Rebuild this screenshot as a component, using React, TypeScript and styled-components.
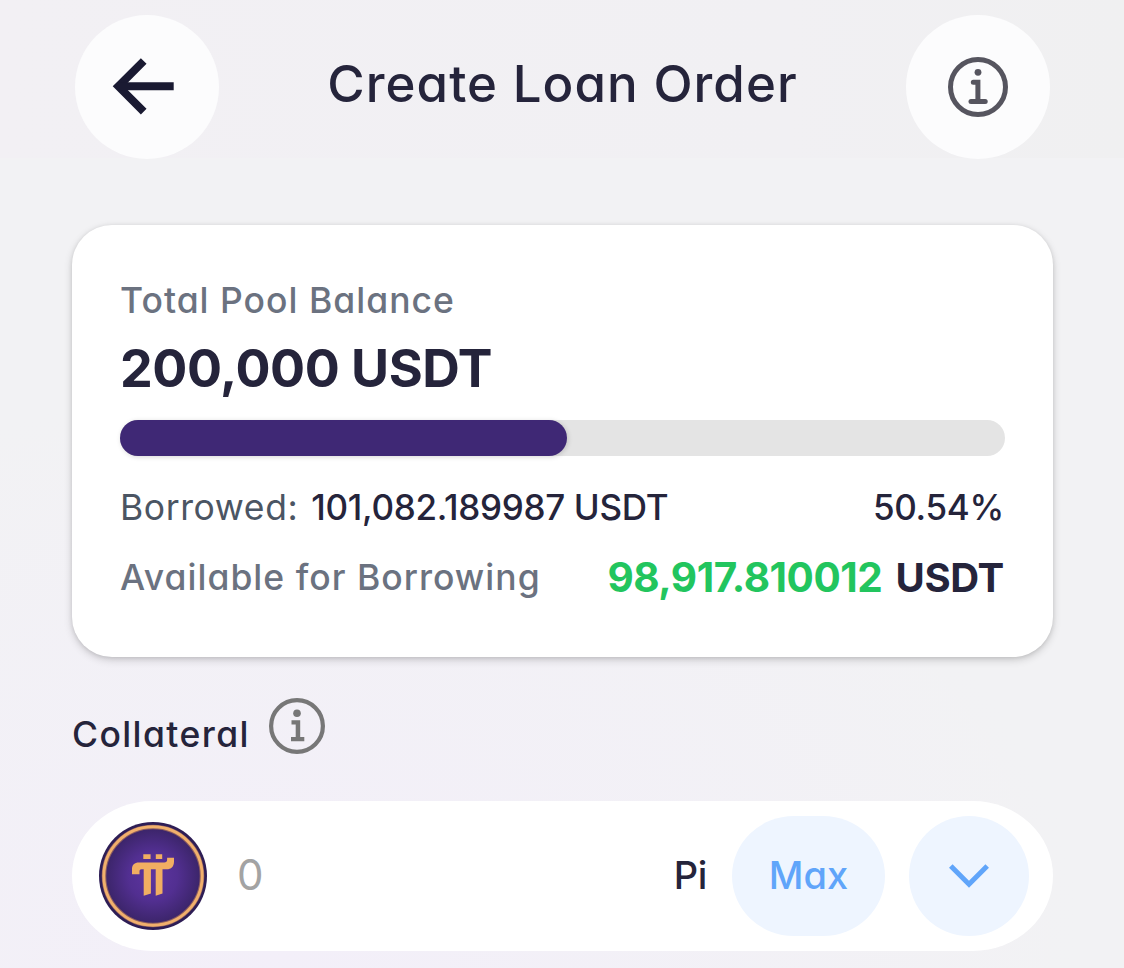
import styled, { createGlobalStyle } from "styled-components";

const colors = {
  ink: "#25243b",
  muted: "#6b7280",
  slate: "#4b5563",
  green: "#22c55e",
  purple: "#3f2875",
  track: "#e4e4e4",
  blue: "#60a5fa",
  blueSoft: "#eef5ff",
  placeholder: "#a3a3a3",
};

const GlobalStyle = createGlobalStyle`
  *, *::before, *::after {
    box-sizing: border-box;
  }

  body {
    margin: 0;
    font-family: Inter, "Open Sans", sans-serif;
    font-feature-settings: "cv11";
    color: ${colors.ink};
  }
`;

const Page = styled.div`
  width: 1124px;
  height: 968px;
  overflow: hidden;
  background:
    radial-gradient(ellipse 800px 560px at 25% 98%, #f3eff9 0%, rgba(243, 239, 249, 0) 100%),
    #f2f2f4;
`;

const Header = styled.header`
  display: flex;
  align-items: center;
  justify-content: space-between;
  height: 158px;
  padding: 16px 74px 0 75px;
  background: linear-gradient(90deg, #f2f0f4, #f1f0f3 70%, #f0f0f1);
`;

const RoundButton = styled.button`
  display: flex;
  align-items: center;
  justify-content: center;
  flex: none;
  width: 144px;
  height: 144px;
  padding: 0;
  border: none;
  border-radius: 50%;
  background: #fcfcfd;
`;

type TextProps = {
  $size: number;
  $weight?: number;
  $color?: string;
  $tracking?: number;
};

const Text = styled.span<TextProps>`
  font-size: ${({ $size }) => $size}px;
  font-weight: ${({ $weight = 500 }) => $weight};
  color: ${({ $color = colors.ink }) => $color};
  letter-spacing: ${({ $tracking = 0 }) => $tracking}px;
  line-height: 54px;
  white-space: nowrap;
`;

const Title = styled(Text)`
  padding-bottom: 6px;
`;

const Main = styled.main`
  display: flex;
  flex-direction: column;
  padding: 67px 71px 0 72px;
`;

const Card = styled.section`
  display: flex;
  flex-direction: column;
  height: 432px;
  padding: 49px 48px 0;
  border-radius: 40px;
  background: #fff;
  box-shadow: 0 3px 9px rgba(0, 0, 0, 0.16), 0 1px 4px rgba(0, 0, 0, 0.1);
`;

const Balance = styled(Text)`
  margin-top: 2px;
  line-height: 78px;
`;

const Track = styled.div`
  height: 36px;
  margin: 12px 0 24px;
  border-radius: 18px;
  background: ${colors.track};
`;

const Fill = styled.div`
  height: 100%;
  border-radius: 18px;
  background: ${colors.purple};
  box-shadow: 1px 1px 5px rgba(0, 0, 0, 0.16);
`;

const Row = styled.div`
  display: flex;
  justify-content: space-between;
  align-items: center;
  height: 54px;
  padding-right: 1px;

  & + & {
    margin-top: 17px;
  }
`;

const Pair = styled.div<{ $gap: number }>`
  display: flex;
  align-items: baseline;
  gap: ${({ $gap }) => $gap}px;
`;

const SectionLabel = styled.div`
  display: flex;
  align-items: flex-start;
  gap: 19px;
  height: 103px;
  margin-top: 41px;
`;

const LabelText = styled(Text)`
  margin-top: 10px;
`;

const AmountField = styled.div`
  display: flex;
  align-items: center;
  height: 150px;
  padding: 0 24px 0 27px;
  border-radius: 80px / 75px;
  background: #fff;
`;

const Amount = styled(Text)`
  flex: 1;
  padding: 0 0 2px 30px;
`;

const Unit = styled(Text)`
  padding-bottom: 2px;
`;

const MaxButton = styled.button`
  width: 153px;
  height: 120px;
  margin: 0 24px 0 25px;
  padding: 0 0 2px;
  border: none;
  border-radius: 62px / 60px;
  background: ${colors.blueSoft};
  font-family: inherit;
  font-feature-settings: inherit;
`;

const SelectButton = styled(RoundButton)`
  width: 120px;
  height: 120px;
  background: ${colors.blueSoft};
`;

function ArrowLeftIcon() {
  return (
    <svg width="62" height="58" viewBox="0 0 62 58" fill="none" stroke="#1a1a32" strokeWidth="8" overflow="visible">
      <path d="M27.7 3 2.4 28.3l25.3 25.3" />
      <path d="M3 28.3h54.7" />
    </svg>
  );
}

function HeaderInfoIcon() {
  return (
    <svg width="60" height="60" viewBox="0 0 60 60" fill="none" stroke="#56555f" strokeLinecap="round">
      <circle cx="30" cy="30" r="27.5" strokeWidth="5" />
      <circle cx="30" cy="15.3" r="3.4" fill="#56555f" stroke="none" />
      <path d="M25.3 25.2h4.6v19" strokeWidth="5" strokeLinejoin="miter" />
      <path d="M23 44.5h14.2" strokeWidth="5" />
    </svg>
  );
}

function LabelInfoIcon() {
  return (
    <svg width="56" height="56" viewBox="0 0 56 56" fill="#777">
      <circle cx="28" cy="28" r="25.9" fill="none" stroke="#777" strokeWidth="4.2" />
      <circle cx="28" cy="15.2" r="3.8" />
      <path d="M22.5 22.3h8.7v16.8h4.1v4.2H22v-4.2h4.7V26.5h-4.2z" />
    </svg>
  );
}

function ChevronIcon() {
  return (
    <svg width="42" height="26" viewBox="0 0 42 26" fill="none" stroke={colors.blue} strokeWidth="5">
      <path d="M2.8 3 21 21.2 39.2 3" />
    </svg>
  );
}

function PiCoin() {
  return (
    <svg width="108" height="108" viewBox="0 0 108 108">
      <defs>
        <radialGradient id="coin">
          <stop offset="0" stopColor="#5d35a0" />
          <stop offset="0.5" stopColor="#522f91" />
          <stop offset="1" stopColor="#3a2467" />
        </radialGradient>
      </defs>
      <circle cx="54" cy="54" r="54" fill="#2d1d55" />
      <circle cx="54" cy="54" r="49" fill="url(#coin)" stroke="#8d5d60" strokeWidth="4.6" />
      <circle cx="54" cy="54" r="49.2" fill="none" stroke="#f1b06c" strokeWidth="2.9" />
      <g fill="#f1ae62">
        <path d="M44.3 32.2h7.3v4.9h-7.3zM56.8 32.2h6.4v4.9h-6.4z" />
        <path d="M33 52.2V47c0-4.3 2.6-6.5 6.8-6.5h25.4c2 0 2.9-1 2.9-2.5v-2.3H75v3.8c0 5-2.6 7.8-7.5 7.8h-4v24.1l-6.8 2.3V47.3h-4.8v24.1l-7.2 2.3V47.3h-2.2c-1.4 0-2 .7-2 2v2.9z" />
      </g>
    </svg>
  );
}

function App() {
  const borrowedShare = 50.54;

  return (
    <Page>
      <GlobalStyle />
      <Header>
        <RoundButton aria-label="Back">
          <ArrowLeftIcon />
        </RoundButton>
        <Title as="h1" $size={51} $weight={540} $tracking={1.05}>
          Create Loan Order
        </Title>
        <RoundButton aria-label="About loans">
          <HeaderInfoIcon />
        </RoundButton>
      </Header>
      <Main>
        <Card>
          <Text $size={35.5} $weight={530} $color={colors.muted} $tracking={1.02}>
            Total Pool Balance
          </Text>
          <Balance $size={52} $weight={660} $tracking={-0.45}>
            200,000 USDT
          </Balance>
          <Track>
            <Fill style={{ width: `${borrowedShare}%` }} />
          </Track>
          <Row>
            <Pair $gap={13}>
              <Text $size={35.5} $weight={400} $color={colors.slate} $tracking={0.6}>
                Borrowed:
              </Text>
              <Text $size={35} $tracking={-0.3}>
                101,082.189987 USDT
              </Text>
            </Pair>
            <Text $size={35} $tracking={-0.3}>
              {borrowedShare}%
            </Text>
          </Row>
          <Row>
            <Text $size={35.5} $weight={530} $color={colors.muted} $tracking={1.02}>
              Available for Borrowing
            </Text>
            <Pair $gap={13}>
              <Text $size={40.5} $weight={660} $color={colors.green} $tracking={-0.45}>
                98,917.810012
              </Text>
              <Text $size={40} $weight={660} $tracking={-0.3}>
                USDT
              </Text>
            </Pair>
          </Row>
        </Card>
        <SectionLabel>
          <LabelText $size={35.5} $weight={530} $tracking={1.4}>
            Collateral
          </LabelText>
          <LabelInfoIcon />
        </SectionLabel>
        <AmountField>
          <PiCoin />
          <Amount $size={42} $weight={400} $color={colors.placeholder}>
            0
          </Amount>
          <Unit $size={38} $tracking={-0.3}>
            Pi
          </Unit>
          <MaxButton>
            <Text $size={38} $color={colors.blue}>
              Max
            </Text>
          </MaxButton>
          <SelectButton aria-label="Choose currency">
            <ChevronIcon />
          </SelectButton>
        </AmountField>
      </Main>
    </Page>
  );
}

export default App;
